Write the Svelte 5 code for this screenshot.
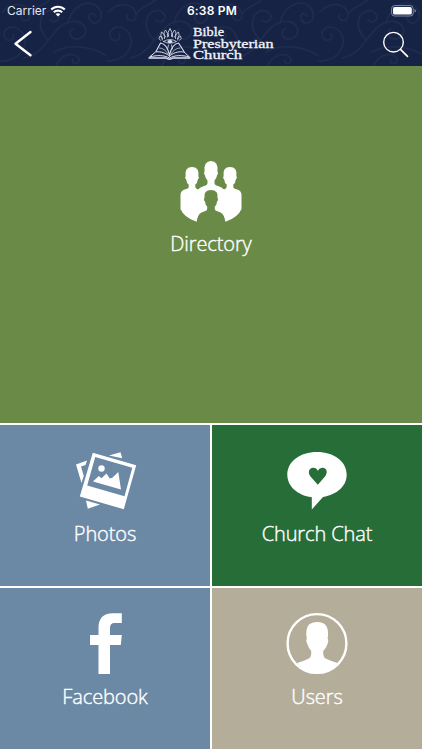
<script>
  const tiles = [
    { id: 'directory', label: 'Directory' },
    { id: 'photos', label: 'Photos' },
    { id: 'chat', label: 'Church Chat' },
    { id: 'facebook', label: 'Facebook' },
    { id: 'users', label: 'Users' }
  ];
</script>

<div class="screen">
  <header>
    <svg class="damask" width="422" height="66" viewBox="0 0 422 66" aria-hidden="true">
      <defs>
        <pattern id="vines" width="106" height="66" patternUnits="userSpaceOnUse">
          <g fill="none" stroke="#33426a" stroke-width="1.7" stroke-linecap="round">
            <path d="M-6 60C18 66 32 44 22 32C14 22 0 29 5 38C9 43 16 39 13 34" />
            <path d="M24 58C46 54 50 30 66 23C83 16 92 32 81 38C72 42 66 32 73 29" />
            <path d="M48 40C34 26 41 8 54 11C64 15 57 26 50 20" />
            <path d="M68 23C72 5 91 -4 100 10C106 22 91 28 89 18C88 13 94 12 95 16" />
            <path d="M54 52C70 43 93 46 110 58M2 12C14 0 28 4 30 14C31 23 20 22 21 15" />
            <path d="M56 66C60 54 75 51 79 59C80 65 71 65 73 60M30 14C36 5 47 5 51 -2" />
          </g>
        </pattern>
      </defs>
      <rect width="422" height="66" fill="url(#vines)" opacity=".28" />
    </svg>

    <div class="status">
      <div class="carrier">
        <span>Carrier</span>
        <svg width="16" height="12" viewBox="0 0 16 12">
          <g fill="none" stroke="#fff" stroke-width="2.1">
            <path d="M1.2 4.6C5 .8 11 .8 14.8 4.6" />
            <path d="M3.8 7.3C6.1 5.1 9.9 5.1 12.2 7.3" />
          </g>
          <path d="M8 11.6L5.6 9.1C6.9 7.9 9.1 7.9 10.4 9.1Z" fill="#fff" />
        </svg>
      </div>
      <div class="time">6:38 PM</div>
      <svg class="battery" width="26" height="12" viewBox="0 0 26 12">
        <rect x=".6" y=".6" width="21.6" height="10.4" rx="3" fill="none" stroke="#8188a0" />
        <rect x="2" y="2" width="18.8" height="7.6" rx="1.7" fill="#fff" />
        <path d="M23.5 4Q25 4.4 25 5.8T23.5 7.6Z" fill="#8188a0" />
      </svg>
    </div>

    <nav>
      <svg width="20" height="28" viewBox="0 0 20 28">
        <path d="M17.5 2L2.5 13.7L17.5 25.3" fill="none" stroke="#fff" stroke-width="2.4" stroke-linecap="round" stroke-linejoin="round" />
      </svg>
      <svg class="brand" width="128" height="38" viewBox="148 23 128 38">
        <g fill="none" stroke="#dfe3ee" stroke-linecap="round" stroke-linejoin="round">
          <path d="M169.5 54C164 49.500 158 49.500 155.500 50L149.500 55C157 53 164 53 169.500 56C175 53 182 53 189.500 55L184 50C180 49.500 175 49.500 169.500 54Z" stroke-width="1" />
          <path d="M156 49.500L160.500 41Q167 42 169.500 53Q172 42 178.500 41L184 49.500" stroke-width="1.100" />
          <path d="M159.500 46Q164.500 46 168 52M180 46Q174.500 46 171 52" stroke-width=".7" />
          <path d="M149 56H166Q169.500 58.500 173 56H190" stroke-width="1.300" />
          <path d="M160.500 38.500Q157.500 37 160 34Q162 35.500 162.500 38M162.500 36.500Q159.500 33 161.500 30Q165 32 164.500 36.500M165.500 35Q162.500 31 165.500 28Q168.500 31 167.500 35M168.500 34.500Q167 30 170 26.500Q173 30 171.500 34.500M172.500 35Q171.500 31 174.500 28Q177.500 31 174.500 35M175.500 36.500Q175 32 178.500 30Q180.500 33 177.500 36.500M177.500 38Q178 35.500 180.500 34Q182.500 37 179.500 38.500" stroke-width=".8" />
          <path d="M163.500 39.500Q170 35.500 176.500 39.500Q170 43 163.500 39.500M168.500 43L167.500 47M171.500 43L172.500 47" stroke-width=".8" />
        </g>
        <ellipse cx="170" cy="39.500" rx="2.500" ry="1.600" fill="#dfe3ee" />
        <g class="brand-name">
          <text x="193" y="34" textLength="31" lengthAdjust="spacingAndGlyphs">Bible</text>
          <text x="193" y="45.500" textLength="80.500" lengthAdjust="spacingAndGlyphs">Presbyterian</text>
          <text x="193" y="57" textLength="49" lengthAdjust="spacingAndGlyphs">Church</text>
        </g>
      </svg>
      <svg width="28" height="28" viewBox="382 29 28 28">
        <g fill="none" stroke="#fff" stroke-width="1.400" stroke-linecap="round">
          <circle cx="393.500" cy="41.200" r="9.800" />
          <path d="M400.500 48.400L407.500 55.300" stroke-width="1.700" />
        </g>
      </svg>
    </nav>
  </header>

  <main>
    {#each tiles as tile (tile.id)}
      <div class="tile {tile.id}">
        {#if tile.id === 'directory'}
          <svg width="64" height="64" viewBox="179 158 64 64">
            <path fill="#fff" d="M198 188.500Q200 186 204 185Q207.800 184 207.500 181.500V179.500Q205.500 177.500 205 174.500Q203.200 172 204.500 170.500Q203.500 160 211 160Q218.500 160 217.500 170.500Q218.800 172 217 174.500Q216.500 177.500 214.500 179.500V181.500Q214.200 184 218 185Q222 186 224 188.500Q227 187.300 226.700 185.500V183.500Q224.500 182 224.200 178.500Q222.300 177 223.600 175Q222.500 166 230 166Q237.500 166 236.400 175Q237.700 177 235.800 178.500Q235.500 182 233.300 183.500V185.500Q233 187.500 236.500 188.300Q241.500 189.500 241.500 194V208Q238 216.500 225.500 220.800L211 210L196.500 220.800Q184 216.500 180.500 208V194Q180.500 189.500 185.500 188.300Q189 187.500 188.700 185.500V183.500Q186.500 182 186.200 178.500Q184.300 177 185.600 175Q184.500 166 192 166Q199.500 166 198.400 175Q199.700 177 197.800 178.500Q197.500 182 195.300 183.500V185.500Q195 187.300 198 188.500Z" />
            <path fill="#698b47" d="M196.700 221Q197.500 213.500 201.500 211.500L206.500 209.500Q207.500 209 207.200 205.500Q205.300 204 205 200.500Q203.200 198.500 204.500 196.500Q203.500 189 211 189Q218.500 189 217.500 196.500Q218.800 198.500 217 200.500Q216.700 204 214.800 205.500Q214.500 209 215.500 209.500L220.500 211.500Q224.500 213.500 225.300 221V222H196.700Z" />
          </svg>
        {:else if tile.id === 'photos'}
          <svg width="64" height="64" viewBox="73 449 64 64">
            <g fill="#fff">
              <path d="M76 464.500L87 460.500L85.500 465L81 466.500L83.800 476L81.500 483Z" />
              <path d="M109 455.500L120.500 452.200L122.200 458.300Z" />
              <path d="M86 500.500L100 504.500L87.800 508.700Z" />
              <path fill-rule="evenodd" d="M92.800 452.800L136.200 465.300L123.800 509.200L79.800 496.500ZM95.200 457L87.200 485.500L124.500 496.300L132.300 467.700Z" />
              <circle cx="101.500" cy="468.500" r="3.200" />
              <path d="M93 481.500L98.800 476L101.500 478.300L106.500 473.500L109.800 478.500L112.300 477.800L118.300 472L121 489.500Z" />
            </g>
          </svg>
        {:else if tile.id === 'chat'}
          <svg width="64" height="64" viewBox="285 449 64 64">
            <path d="M317 452C334 452 346.700 461.500 346.700 474.700C346.700 486 337 494.500 323 497L311.800 509.500V497.300C297 495 287.300 486 287.300 474.700C287.300 461.500 300 452 317 452Z" fill="#fff" />
            <path d="M317.800 484.700L310.500 476.500C307.500 472.500 309 468 313 467.700Q316.500 467.600 317.800 470.700Q319.500 467.600 322.600 467.700C327 468 328 472.500 325 476.500Z" fill="#266d38" />
          </svg>
        {:else if tile.id === 'facebook'}
          <svg width="64" height="64" viewBox="73 612 64 64">
            <path d="M98.500 674V645H90V635H98.500V628Q98.500 613.500 112.500 613.300H121.800V623H114.500Q110 623 110 628V635H121.800L120.800 645H110V674Z" fill="#fff" />
          </svg>
        {:else}
          <svg width="64" height="64" viewBox="285 612 64 64">
            <circle cx="317" cy="643.500" r="29.400" fill="none" stroke="#fff" stroke-width="2.400" />
            <path d="M297 663Q304 661 309 658.500Q311.500 657 311.200 651Q308.500 648 307.500 644.500Q305.500 640 306.800 639Q305 629 309 624.500Q312 621.800 317 622Q330.500 622 327.600 638.500Q329 640 327.300 644.500Q326 648.500 323.200 651Q323 657 325.500 658.500Q331 661 337.500 663Q330 673 317 673Q304 673 297 663Z" fill="#fff" />
          </svg>
        {/if}
        <div class="label">{tile.label}</div>
      </div>
    {/each}
  </main>
</div>

<style>
  .screen {
    width: 422px;
    height: 750px;
    display: flex;
    flex-direction: column;
    overflow: hidden;
    background: #fff;
    color: #fff;
  }
  svg { display: block; flex: none; }
  header {
    position: relative;
    height: 65.500px;
    flex: none;
    background: #162345;
    overflow: hidden;
  }
  .damask { position: absolute; inset: 0; }
  .status {
    position: relative;
    display: grid;
    grid-template-columns: 1fr auto 1fr;
    align-items: center;
    height: 22px;
    padding: 0 5px 0 7px;
    font: 12px/22px Inter, sans-serif;
  }
  .carrier { display: flex; align-items: center; gap: 4px; color: #e4e6ed; }
  .time { font-weight: 600; letter-spacing: .2px; }
  .battery { justify-self: end; }
  nav {
    position: relative;
    display: flex;
    justify-content: space-between;
    align-items: center;
    height: 43px;
    padding: 0 12px 0 13px;
  }
  .brand { margin-left: 8px; }
  .brand-name {
    font: 400 12px "Liberation Serif", serif;
    fill: #f1f3f9;
    stroke: #f1f3f9;
    stroke-width: .3px;
  }
  main {
    flex: none;
    display: grid;
    grid-template: 357px 161px 161px / 210px 210px;
    gap: 2px;
  }
  .tile {
    display: flex;
    flex-direction: column;
    align-items: center;
    padding-top: 24px;
    box-sizing: border-box;
  }
  .directory { grid-column: 1 / -1; padding-top: 93px; background: #698b47; }
  .photos, .facebook { background: #6b89a5; }
  .chat { background: #266d38; }
  .users { background: #b4ad99; }
  .label {
    margin-top: 7px;
    font: 300 20px/28px "Open Sans", "Noto Sans", sans-serif;
    letter-spacing: -.1px;
    white-space: nowrap;
    -webkit-text-stroke: .4px #fff;
  }
</style>
